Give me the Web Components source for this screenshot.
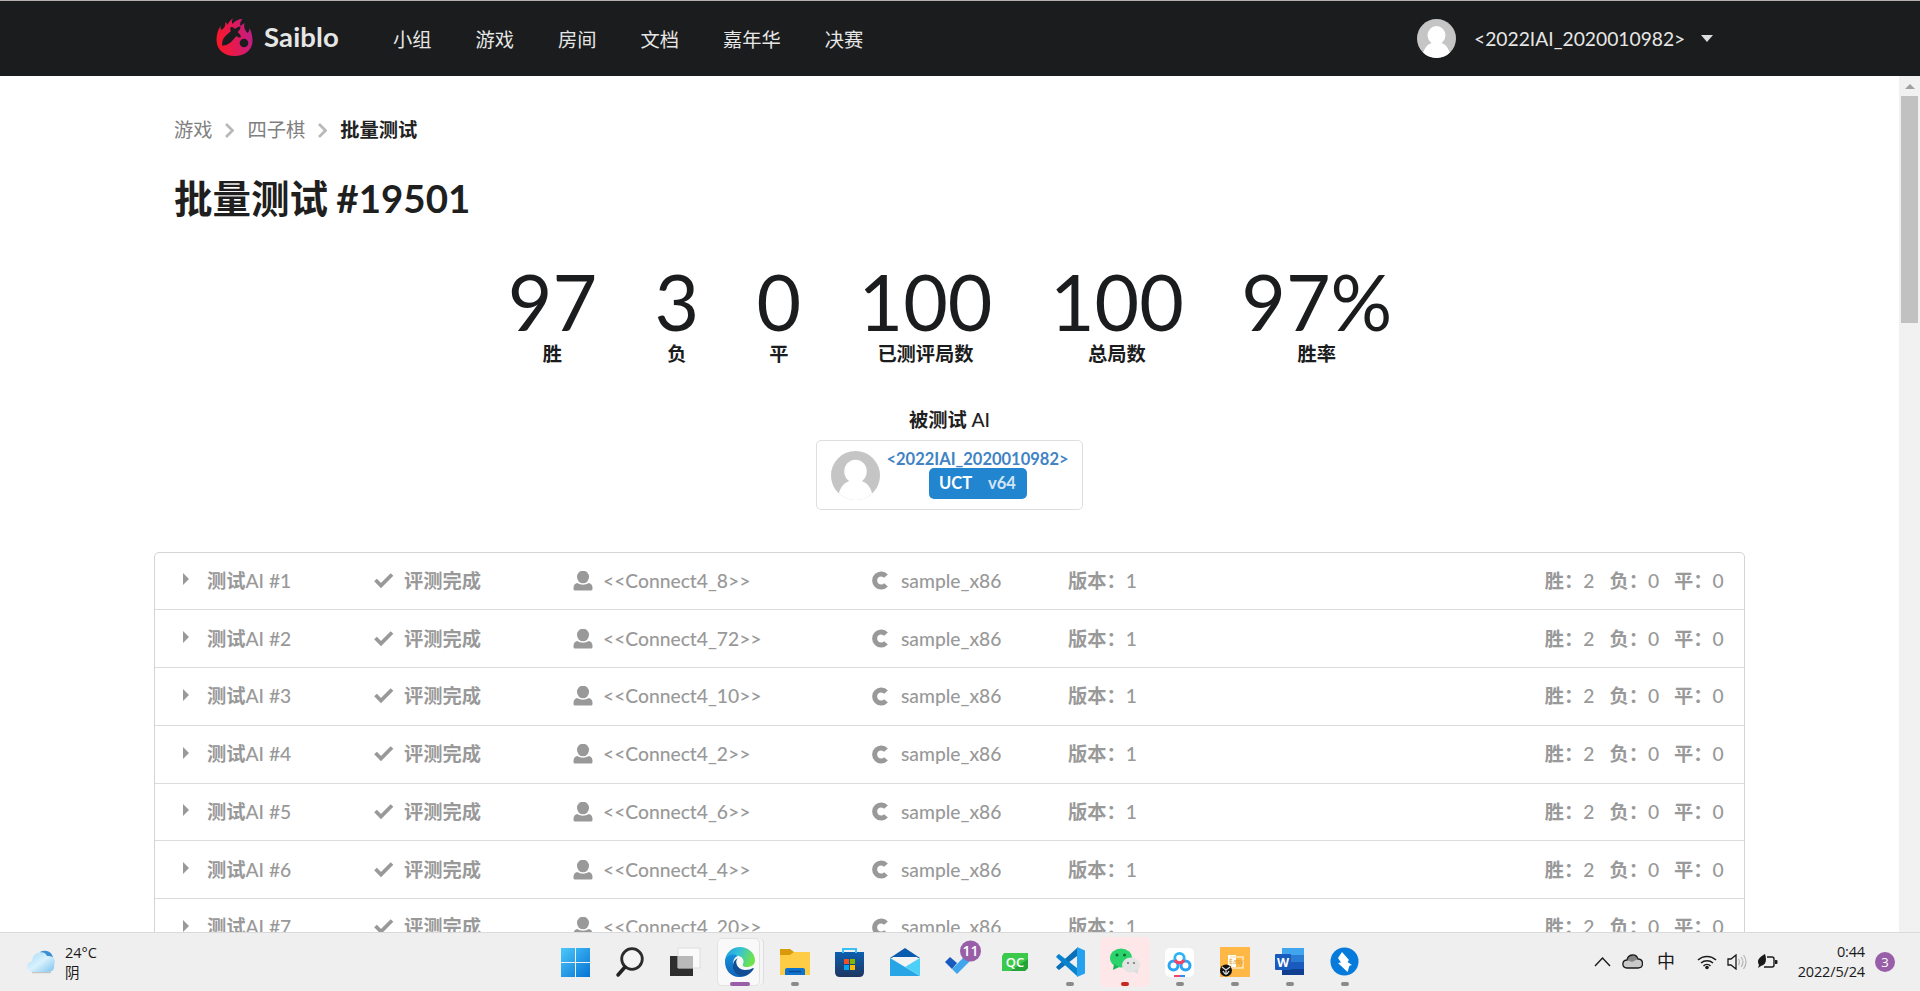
<!DOCTYPE html>
<html lang="zh-CN">
<head>
<meta charset="utf-8">
<title>批量测试 #19501 - Saiblo</title>
<style>
html,body{margin:0;height:100%;overflow:hidden;background:#fff}
body{font-family:Lato,"Noto Sans CJK SC",sans-serif;font-size:19.25px;color:#1f1f1f}
</style>
</head>
<body>
<saiblo-app></saiblo-app>
<script>
const define=(name,html)=>customElements.define(name,class extends HTMLElement{
  constructor(){super();this.attachShadow({mode:'open'})}
  connectedCallback(){
    const t=document.createElement('template');
    t.innerHTML=typeof html==='function'?html(this):html;
    this.shadowRoot.replaceChildren(t.content.cloneNode(true));
  }
});

define('user-avatar',`<style>:host{display:block;flex:none}svg{display:block;width:100%;height:100%}</style>
<svg viewBox="0 0 48 48"><defs><clipPath id="c"><circle cx="24" cy="24" r="24"/></clipPath></defs><g clip-path="url(#c)"><rect width="48" height="48" fill="#c5c5c5"/><g fill="#fff"><ellipse cx="24" cy="20" rx="11" ry="11.500"/><path d="M18 27h12v2.500c6 2 11 8 11 18.500H7C7 37.500 12 31.500 18 29.500z"/></g></g></svg>`);

define('nav-item',`<style>:host{display:block;padding:0 22px;line-height:28px;white-space:nowrap}</style><slot></slot>`);

define('site-header',`<style>
:host{display:flex;align-items:center;box-sizing:border-box;height:76px;background:#1b1c1d;border-top:1px solid #b7b0ae;color:#e6e6e6;padding-left:216px;padding-right:207px}
.logo{width:37px;height:38px;margin-top:-3px}
b{font-size:27.500px;letter-spacing:.15px;line-height:32px;margin-left:11px;width:86px;margin-top:-4px;white-space:nowrap}
nav{display:flex;flex:1;margin-left:21px;padding-top:2px}
user-avatar{width:39px;height:39px}
.name{margin-left:18px;width:212px;white-space:nowrap}
.caret{width:12px;height:7px;margin-left:15px}
</style>
<svg class="logo" viewBox="0 0 36 38"><defs><linearGradient id="g" x1="0" y1=".5" x2="1" y2=".3"><stop offset="0" stop-color="#fb1729"/><stop offset=".5" stop-color="#e01a57"/><stop offset="1" stop-color="#bd1d8d"/></linearGradient></defs>
<path fill="url(#g)" d="M17 0c-2 2-2 4-1 6 2-3 6-5 10-5-2 2-3 5-2 7l4-3c-1 4 0 7 3 10 1-1 2-2 2-5 2 4 3 8 3 13 0 9-8 15-18 15S0 32 0 22c0-5 1-9 4-14 0 2 0 3 1 4 3-2 4-4 4-8 1 1 2 2 2 3 1-3 3-5 6-7z"/>
<path fill="#1b1c1d" d="M5.500 27.500c0-4 1-7 3-9l6-5.500c-1-1-1-3 0-4 1 0 2 0 3 1l1 1c1-1 3-2.500 5.500-2.500 0 2-1 4-3 5.500l2 2c1 1 1.500 2 1 3.500-1 0-3 0-4-1.500l-5 5.500c-3 2.500-5 4-9.500 4z"/><circle cx="27.500" cy="25" r="4.300" fill="#1b1c1d"/></svg>
<b>Saiblo</b>
<nav><nav-item>小组</nav-item><nav-item>游戏</nav-item><nav-item>房间</nav-item><nav-item>文档</nav-item><nav-item>嘉年华</nav-item><nav-item>决赛</nav-item></nav>
<user-avatar></user-avatar><span class="name">&lt;2022IAI_2020010982&gt;</span>
<svg class="caret" viewBox="0 0 12 7"><path fill="#ddd" d="M0 0h12L6 7z"/></svg>`);

define('bread-crumb',`<style>:host{display:flex;align-items:center;height:28px;line-height:28px;color:#808080;white-space:nowrap}
svg{width:9px;height:15px;margin:0 13.500px 0 12.500px}b{color:#222}</style>
<span>游戏</span><svg viewBox="0 0 9 15"><path d="M1 1l6.500 6.500L1 14" fill="none" stroke="#b8b8b8" stroke-width="2.700"/></svg><span>四子棋</span><svg viewBox="0 0 9 15"><path d="M1 1l6.500 6.500L1 14" fill="none" stroke="#b8b8b8" stroke-width="2.700"/></svg><b>批量测试</b>`);

define('stat-item',h=>`<style>:host{display:flex;flex-direction:column;align-items:center;margin:0 28.700px;color:#1b1c1d}
.v{font-size:77px;line-height:77px;height:78px}.l{font-weight:700;line-height:26px;white-space:nowrap}</style>
<span class="v">${h.getAttribute('value')}</span><span class="l"><slot></slot></span>`);

define('ai-card',`<style>:host{display:flex;box-sizing:border-box;width:267px;height:70px;border:1px solid #dededf;border-radius:5px;padding:10px 13px 0 14px}
user-avatar{width:49px;height:49px}
.r{flex:1;display:flex;flex-direction:column;align-items:center;margin-left:6px}
a{color:#4183c4;font-size:16.5px;font-weight:700;line-height:17px;height:17px;white-space:nowrap}
.tag{display:flex;box-sizing:border-box;width:98px;height:31px;border-radius:5px;background:#2185d0;color:#fff;font-size:16.5px;font-weight:700;line-height:30px;padding-left:10px;gap:16px;margin-left:1px}
.tag span+span{opacity:.8}</style>
<user-avatar></user-avatar><div class="r"><a>&lt;2022IAI_2020010982&gt;</a><div class="tag"><span>UCT</span><span>v64</span></div></div>`);

define('test-row',h=>`<style>
:host{display:grid;grid-template-columns:24px 167px 30px 169px 30px 269px 29px 167px 1fr auto;align-items:center;box-sizing:border-box;height:57.75px;padding:0 19px 0 28px;color:#999;white-space:nowrap;border-bottom:1px solid #dcdcdd;line-height:26px;font-weight:500}
svg{display:block}b{font-weight:700}.w{letter-spacing:0}
.s{display:flex}.s span{width:64.6px}.s span:last-child{width:51px}
</style>
<svg width="7" height="12" viewBox="0 0 7 12" style="margin-top:-3px"><path fill="#999" d="M0 0l6 6-6 6z"/></svg>
<span><b>测试</b>AI #${h.getAttribute('n')}</span>
<svg width="20" height="17" viewBox="0 0 20 17" style="margin-top:-1px"><path d="M1.500 8l5.500 5.500L18 2.500" fill="none" stroke="#999" stroke-width="3.800"/></svg>
<b>评测完成</b>
<svg width="20" height="20" viewBox="0 0 20 20"><ellipse cx="10" cy="6" rx="6" ry="6.300" fill="#999"/><path fill="#999" d="M4 12q6 3.500 12 0 3.500 1 3.500 5v1q0 1.500-1.500 1.500H2Q.5 19.500.5 18v-1Q.5 13 4 12z"/></svg>
<span class="w">&lt;&lt;Connect4_${h.getAttribute('ai')}&gt;&gt;</span>
<svg width="17" height="19" viewBox="0 0 17 19"><path d="M14 5.200A6.500 6.500 0 1 0 14 13.800" fill="none" stroke="#999" stroke-width="5"/></svg>
<span class="w">sample_x86</span>
<span><b>版本：</b>1</span>
<div class="s"><span><b>胜：</b>2</span><span><b>负：</b>0</span><span><b>平：</b>0</span></div>`);

define('page-body',`<style>
:host{display:grid;grid-template-columns:1fr 21px;overflow:hidden;min-height:0}
main{overflow:hidden;padding:40px 154px 0}
.in{margin-left:20px}
h1{font-size:38.5px;line-height:48px;margin:30px 0 0;font-weight:700;white-space:nowrap;word-spacing:-1px}
.stats{display:flex;justify-content:center;margin-top:40.500px;padding-left:1px}
.tested{display:flex;flex-direction:column;align-items:center;margin-top:40px}
.tested p{margin:0 0 7px;line-height:26px;font-weight:500}
.tested b{font-weight:700}
.list{margin-top:42px;border:1px solid #d4d4d5;border-radius:5px}
.bar{background:#f1f1f1;display:flex;flex-direction:column;align-items:center;padding-top:8px}
.thumb{width:17px;height:227px;background:#c1c1c1;margin-top:7px}
</style>
<main><div class="in"><bread-crumb></bread-crumb><h1>批量测试 #19501</h1></div>
<div class="stats"><stat-item value="97">胜</stat-item><stat-item value="3">负</stat-item><stat-item value="0">平</stat-item><stat-item value="100">已测评局数</stat-item><stat-item value="100">总局数</stat-item><stat-item value="97%">胜率</stat-item></div>
<div class="tested"><p><b>被测试</b> AI</p><ai-card></ai-card></div>
<div class="list"><test-row n="1" ai="8"></test-row><test-row n="2" ai="72"></test-row><test-row n="3" ai="10"></test-row><test-row n="4" ai="2"></test-row><test-row n="5" ai="6"></test-row><test-row n="6" ai="4"></test-row><test-row n="7" ai="20"></test-row></div></main>
<div class="bar"><svg width="10" height="5"><path fill="#a0a0a0" d="M0 5l5-5 5 5z"/></svg><div class="thumb"></div></div>`);

define('task-icon',h=>`<style>
:host{display:flex;position:relative;box-sizing:border-box;width:55px;height:50px;padding-top:10px;flex-direction:column;align-items:center}
:host([tile])::before{content:"";position:absolute;inset:0 3px 0 2px;border-radius:5px;background:#fde7e9}
:host([tile=edge])::before{inset:1px 8px 1px 4px;background:#f9f9f9;border:1px solid #e2e2e2;box-shadow:4px 0 0 -1px #f5f5f5,5px 0 0 -1px #ddd}
::slotted(svg){display:block;position:relative;overflow:visible}
.dot{position:relative;width:8px;height:4px;border-radius:2px;background:${h.getAttribute('dot')||'transparent'};margin-top:5px}
:host([tile=edge]) .dot{width:20px}
</style><slot></slot><div class="dot"></div>`);

define('task-bar',`<style>
:host{display:grid;grid-template-columns:547.500px 825px 1fr;height:59px;box-sizing:border-box;background:#efefef;border-top:1px solid #dadada;font-family:"Open Sans","Noto Sans CJK SC",sans-serif;font-size:14.500px;color:#1a1a1a;padding-top:4px}
.weather{display:flex;padding:13px 0 0 27px;gap:10px}
.weather p{margin:-7px 0 0;line-height:20px}
.apps{display:flex}
.tray{display:flex;justify-content:flex-end;padding-right:25px}
.tray svg{display:block;flex:none}
.time{text-align:right;line-height:20px;width:86px;letter-spacing:-.15px;padding-top:5px;white-space:nowrap}
.cnt{width:20px;height:20px;border-radius:50%;background:#985fa8;color:#fff;font-size:13px;line-height:20px;text-align:center;margin:15px 0 0 10px}
.zh{font-size:18px;line-height:24px;margin-top:12px;width:18px;margin-left:14px}
</style>
<div class="weather"><svg width="28" height="24" viewBox="0 0 28 24"><defs><linearGradient id="w" x1="0" y1="0" x2="1" y2="1"><stop stop-color="#a5daf7"/><stop offset=".5" stop-color="#d9f1fd"/><stop offset="1" stop-color="#7cc3ee"/></linearGradient></defs><path d="M13 2c5-3 13-1 13 7l-3 3z" fill="#3b8fd4"/><path d="M5 22.700h19" stroke="#bbb"/><path d="M6 22c-7 0-8-9-1-11C5 2 18-1 20 6c7-1 9 5 7 9 1 4-2 7-5 7z" fill="url(#w)"/></svg><p>24°C<br>阴</p></div>
<div class="apps">
<task-icon><svg width="30" height="30" viewBox="0 0 30 30"><defs><linearGradient id="a" x1="0" y1="0" x2="1" y2="1"><stop stop-color="#4cc8fb"/><stop offset="1" stop-color="#0573d4"/></linearGradient></defs><path fill="url(#a)" d="M1 1h14v14H1zM16 1h14v14H16zM1 16h14v14H1zM16 16h14v14H16z"/></svg></task-icon>
<task-icon><svg width="30" height="30" viewBox="0 0 30 30"><circle cx="17" cy="12" r="10.300" fill="#f4f4f4" stroke="#2b2b2b" stroke-width="2.800"/><path d="M10 20l-7 8" stroke="#222" stroke-width="3.500" stroke-linecap="round"/></svg></task-icon>
<task-icon><svg width="30" height="30" viewBox="0 0 30 30"><path fill="#2e2e2e" d="M0 9h23v20H0z"/><path fill="#fafafa" stroke="#ddd" d="M8 1h22v20H8z"/><path fill="#b9b9b9" d="M8 9h15v12H8z"/></svg></task-icon>
<task-icon tile="edge" dot="#985fa8"><svg width="30" height="30" viewBox="0 0 30 30"><defs><linearGradient id="e1" x1="0" y1="0" x2="1" y2=".3"><stop stop-color="#1d9be0"/><stop offset=".5" stop-color="#35c1d8"/><stop offset="1" stop-color="#6fe34d"/></linearGradient><linearGradient id="e2" x1="0" y1="0" x2="0" y2="1"><stop stop-color="#1591dd"/><stop offset="1" stop-color="#0f62b8"/></linearGradient></defs><path fill="url(#e1)" d="M0 15C0 6 7 0 15 0s15 6 15 13c0 5-4 7-8 7s-5-1.500-4-3 1-5-2-7C10 7 2 9 0 15z"/><path fill="url(#e2)" d="M0 14C1 8 8 6 13 9c-4 1-6 6-4 11s7 9 13 8c-3 2-6 2-8 2C6 30-.5 23 0 14z"/><path fill="#104d94" d="M13 11c-4 3-1 12 7 12 4 0 6-1 8-2 1 0 1 1 0 2-4 6-11 8-16 4-5-3-6-13 1-16z"/></svg></task-icon>
<task-icon dot="#8a8a8a"><svg width="30" height="30" viewBox="0 0 30 30"><path fill="#d99a0a" d="M0 2h10l4 3v5H0z"/><path fill="#ffcd45" d="M0 8h10l4-3h16v23H0z"/><path fill="#0d72cd" d="M5 28v-5q0-2 2-2h16q2 0 2 2v5z"/><path stroke="#0a4a91" stroke-width="1.500" d="M9 24.500h12"/></svg></task-icon>
<task-icon><svg width="30" height="30" viewBox="0 0 30 30"><defs><linearGradient id="s" x1="0" y1="0" x2="0" y2="1"><stop stop-color="#0c60b0"/><stop offset="1" stop-color="#1e3560"/></linearGradient></defs><path fill="url(#s)" d="M0 5h29v20q0 5-5 5H5q-5 0-5-5z"/><path fill="none" stroke="#3bc0f5" stroke-width="2" d="M8 6V2h13v4"/><path fill="#f25022" d="M9 12h5v5H9z"/><path fill="#7fba00" d="M15 12h5v5h-5z"/><path fill="#00a4ef" d="M9 18h5v5H9z"/><path fill="#ffb900" d="M15 18h5v5h-5z"/></svg></task-icon>
<task-icon><svg width="30" height="30" viewBox="0 0 30 30"><path fill="#0b5cae" d="M0 11L15 1l15 10z"/><path fill="#f3f3f3" d="M2 10h26L15 22z"/><path fill="#28a5e5" d="M0 11l15 9 15 9H0z"/><path fill="#4dd0f8" d="M30 11v18L15 20z"/></svg></task-icon>
<task-icon><svg width="30" height="30" viewBox="0 0 30 30"><path fill="#185abd" d="M0 15l5-5 7 6-5 6z"/><path fill="#41a5ee" d="M7 22L22 7l5 5-15 15z"/><circle cx="25.500" cy="4" r="10.500" fill="#985fa8"/><text x="25.500" y="9" font-size="14" font-weight="600" text-anchor="middle" fill="#fff">11</text></svg></task-icon>
<task-icon><svg width="30" height="30" viewBox="0 0 30 30"><path fill="#3bc94c" d="M4 6h24v15l-3 3H2V9z"/><path fill="#25a43a" d="M28 12v9l-3 3H10z"/><text x="15" y="20" font-size="13" font-weight="600" text-anchor="middle" fill="#fff">QC</text></svg></task-icon>
<task-icon dot="#8a8a8a"><svg width="30" height="30" viewBox="0 0 30 30"><path fill="#0b70b8" d="M1 20l21-19v8L4 23q-1 0-3-3z"/><path fill="#0a83cf" d="M1 10l21 19v-8L4 7q-1 0-3 3z"/><path fill="#25a2ef" d="M22 0l8 3.500v23L22 30z"/></svg></task-icon>
<task-icon tile dot="#c42b1c"><svg width="30" height="30" viewBox="0 0 30 30"><ellipse cx="11" cy="11" rx="11" ry="9.500" fill="#2bd36c"/><path fill="#16b455" d="M4 17l-1 6 6-3z"/><circle cx="7" cy="8" r="1.500" fill="#156b38"/><circle cx="14.500" cy="8" r="1.500" fill="#156b38"/><ellipse cx="21" cy="18" rx="9" ry="7.500" fill="#e4e4e4"/><path fill="#ddd" d="M23 24l5 3v-5z"/><circle cx="18" cy="16" r="1.100" fill="#777"/><circle cx="24" cy="16" r="1.100" fill="#777"/></svg></task-icon>
<task-icon dot="#8a8a8a"><svg width="30" height="30" viewBox="0 0 30 30"><rect x="0" y="1" width="29" height="29" rx="5" fill="#fff"/><g fill="none"><circle cx="8.500" cy="18.500" r="4.500" stroke="#2aa5f5" stroke-width="3"/><circle cx="20.500" cy="18.500" r="4.500" stroke="#2aa5f5" stroke-width="3"/><circle cx="14.500" cy="11" r="4.700" stroke="#2bb5f5" stroke-width="2.800"/><path d="M10 13a5 5 0 0 0 9 0" stroke="#f3446a" stroke-width="3"/></g><path stroke="#f3446a" stroke-width="2" d="M9 29h6"/><path stroke="#3989f5" stroke-width="2" d="M15 29h5"/></svg></task-icon>
<task-icon dot="#8a8a8a"><svg width="30" height="30" viewBox="0 0 30 30"><path fill="#ffb846" d="M0 0h30v30H0z"/><path fill="#fff" d="M8 8h8v12H8z"/><path fill="none" stroke="#ffe7b8" stroke-width="1.500" d="M11 10h12v11H11z"/><text x="9" y="17" font-size="7" fill="#dd9b30">Easy</text><circle cx="6" cy="23.500" r="6" fill="#111"/><path stroke="#ddd" stroke-width="1.300" fill="none" d="M2 20l4 3 4-3M6 23v5M3 24l2 3M9 24l-2 3"/></svg></task-icon>
<task-icon dot="#8a8a8a"><svg width="30" height="30" viewBox="0 0 30 30"><path fill="#41a5ee" d="M7 1h22v7H7z"/><path fill="#2b7cd3" d="M7 8h22v7H7z"/><path fill="#185abd" d="M7 15h22v7H7z"/><path fill="#103f91" d="M7 22h22v6H7z"/><rect y="7" width="16" height="16" rx="1" fill="#185abd"/><text x="8" y="19.500" font-size="12.500" font-weight="700" text-anchor="middle" fill="#fff">W</text></svg></task-icon>
<task-icon dot="#8a8a8a"><svg width="30" height="30" viewBox="0 0 30 30"><circle cx="14.500" cy="14.500" r="14" fill="#077bdc"/><path fill="#fff" d="M12 5l7 8-1.500 2L22 18l-2.500.8L17.500 25 8 16l3-.5L8 11z"/></svg></task-icon>
</div>
<div class="tray">
<svg width="17" height="10" viewBox="0 0 17 10" style="margin-top:20px"><path d="M1 9l7.500-8L16 9" fill="none" stroke="#1a1a1a" stroke-width="1.400"/></svg>
<svg width="21" height="15" viewBox="0 0 21 15" style="margin:17px 0 0 11px"><path d="M5 14C-1 14 0 6 5 6 6 0 14-1 16 5c6 0 6 9 0 9z" fill="#c9c9c9"/><path d="M5 6C6 0 14-1 16 5l-6 3z" fill="#858585"/><path d="M5 14C-1 14 0 6 5 6 6 0 14-1 16 5c6 0 6 9 0 9z" fill="none" stroke="#1a1a1a" stroke-width="1.300"/></svg>
<span class="zh">中</span>
<svg width="20" height="16" viewBox="0 0 20 16" style="margin:17px 0 0 22px"><g fill="none" stroke="#1a1a1a" stroke-width="1.500"><path d="M1 6a13 13 0 0 1 18 0M4 9a9 9 0 0 1 12 0M6.500 12a5 5 0 0 1 7 0"/></g><circle cx="10" cy="13.500" r="1.800" fill="#1a1a1a"/></svg>
<svg width="20" height="16" viewBox="0 0 20 16" style="margin:17px 0 0 10px"><path d="M1 5h3l5-4v14l-5-4H1z" fill="none" stroke="#1a1a1a" stroke-width="1.300"/><path d="M11.500 5q2 3 0 6M14 3q4 5 0 10M16.500 1q5 7 0 14" fill="none" stroke="#b5b5b5" stroke-width="1.200"/></svg>
<svg width="21" height="15" viewBox="0 0 21 15" style="margin:17px 1px 0 10px"><path d="M10 3h5q2 0 2 2v6q0 2-2 2H7" fill="none" stroke="#1a1a1a" stroke-width="1.400"/><path d="M18 6h1.500q1 0 1 1v2q0 1-1 1H18zM8 0c2 6 1 11-4 12l-3 2 1-3C-1 6 3 3 8 0z" fill="#1a1a1a"/></svg>
<div class="time">0:44<br>2022/5/24</div><div class="cnt">3</div>
</div>`);

define('saiblo-app',`<style>:host{display:grid;grid-template-rows:76px 856px 59px;height:991px;width:1920px}</style>
<site-header></site-header><page-body></page-body><task-bar></task-bar>`);
</script>
</body>
</html>
